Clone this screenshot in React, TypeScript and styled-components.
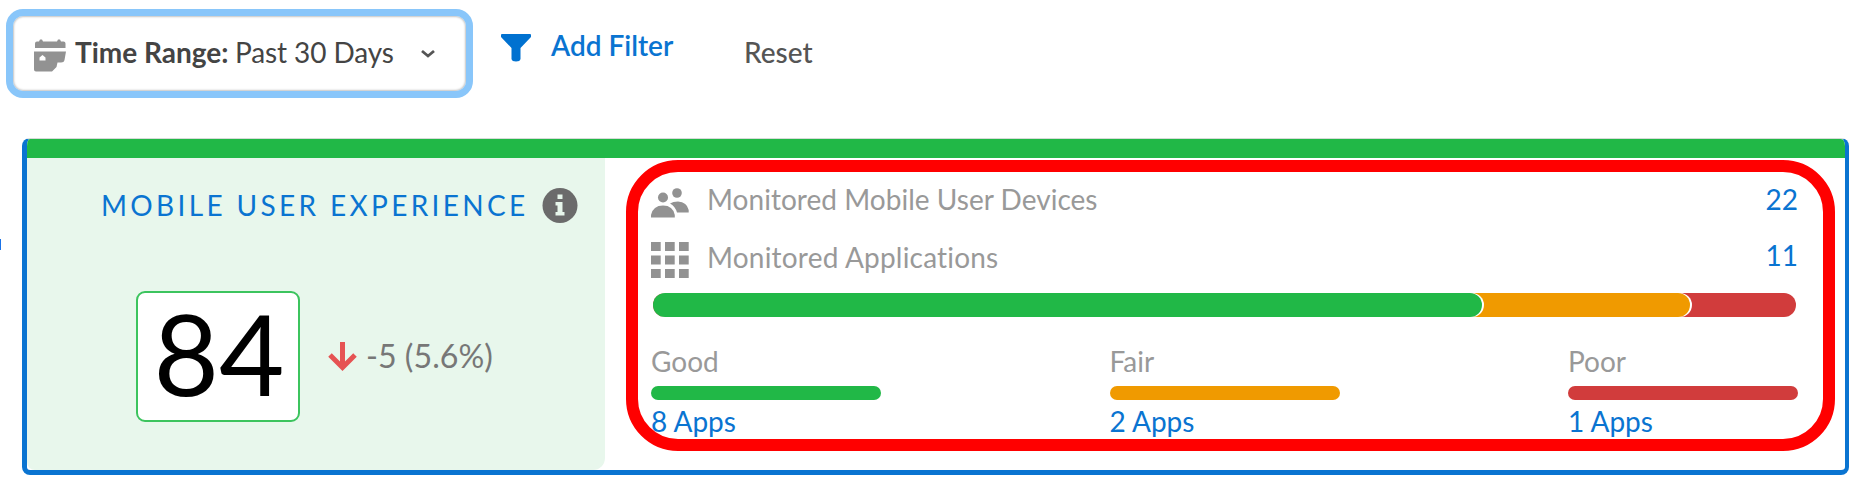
import React from "react";
import styled, { createGlobalStyle } from "styled-components";

const GlobalStyle = createGlobalStyle`
  * { box-sizing: border-box; }
  body {
    margin: 0;
    background: #fff;
    overflow: hidden;
    font-family: Lato, "Open Sans", sans-serif;
    font-size: 28px;
    line-height: 34px;
    font-variant-ligatures: none;
  }
`;

const colors = {
  good: "#21b847",
  fair: "#f09a00",
  poor: "#d13c3c",
  link: "#0a74d1",
  muted: "#999",
};

const Page = styled.main`
  position: relative;
  width: 1854px;
  height: 482px;
  background: #fff;
`;

const Toolbar = styled.header`
  display: flex;
  align-items: flex-start;
  height: 138px;
  padding: 9px 0 0 6px;
`;

const TimeButton = styled.button`
  display: flex;
  align-items: center;
  width: 467px;
  height: 89px;
  padding: 0 0 3px 21px;
  border: 7px solid #89c6fa;
  border-radius: 17px;
  background: #fff;
  box-shadow: inset 0 0 2px 1px #c4c4c4;
  font: inherit;
  color: #444;
  white-space: nowrap;
`;

const CalendarIcon = styled.svg`
  flex: none;
  margin: 6px 9px 0 0;
`;

const TimeLabel = styled.span`
  width: 160px;
  font-weight: 700;
  text-align: left;
`;

const TimeValue = styled.span`
  width: 185px;
  text-align: left;
  letter-spacing: -0.1px;
`;

const FilterButton = styled.a`
  display: flex;
  align-items: flex-start;
  margin: 19px 0 0 28px;
  width: 243px;
  color: ${colors.link};
  font-weight: 600;
  gap: 20px;
  white-space: nowrap;
`;

const FunnelIcon = styled.svg`
  flex: none;
  margin-top: 6px;
`;

const Reset = styled.a`
  margin-top: 26px;
  color: #555;
  font-weight: 500;
`;

const Card = styled.section`
  display: flex;
  flex-direction: column;
  width: 1827px;
  height: 337px;
  margin-left: 22px;
  border: 5px solid ${colors.link};
  border-top: 1px solid #d5dbd7;
  border-right-width: 4px;
  border-radius: 8px;
  overflow: hidden;
`;

const StatusStrip = styled.div`
  flex: none;
  height: 19px;
  background: ${colors.good};
`;

const CardBody = styled.div`
  display: flex;
  flex: 1;
`;

const Summary = styled.div`
  width: 578px;
  padding: 30px 0 0 75px;
  background: #e8f7ec;
  border-radius: 0 0 12px 8px;
`;

const SummaryHeader = styled.div`
  display: flex;
  align-items: flex-start;
`;

const SummaryTitle = styled.h2`
  width: 440px;
  margin: 0 0 0 -1px;
  padding-right: 0;
  flex: 0 0 441px;
  color: ${colors.link};
  font-size: 28px;
  font-weight: 400;
  letter-spacing: 3.35px;
  white-space: nowrap;
`;

const ScoreRow = styled.div`
  display: flex;
  align-items: center;
  height: 131px;
  margin: 67px 0 0 34px;
`;

const Score = styled.div`
  display: flex;
  justify-content: center;
  width: 164px;
  height: 131px;
  padding-left: 2px;
  border: 2px solid #3cc45e;
  border-radius: 9px;
  background: #fff;
  color: #000;
  font-size: 113px;
  line-height: 118px;
`;

const ArrowIcon = styled.svg`
  flex: none;
  margin-left: 28px;
`;

const Change = styled.span`
  margin: 0 0 2px 9px;
  color: #777;
  font-size: 32.2px;
  white-space: nowrap;
`;

const Details = styled.div`
  flex: 1;
  padding: 24px 47px 0 46px;
`;

const MetricRow = styled.div<{ $height: number }>`
  display: flex;
  align-items: flex-start;
  height: ${(p) => p.$height}px;
`;

const MetricIcon = styled.svg<{ $top: number }>`
  flex: none;
  margin: ${(p) => p.$top}px 18px 0 0;
`;

const MetricLabel = styled.span<{ $tracking: number }>`
  flex: 1;
  color: ${colors.muted};
  letter-spacing: ${(p) => p.$tracking}px;
`;

const MetricValue = styled.a<{ $raise?: boolean }>`
  margin-top: ${(p) => (p.$raise ? -2 : 0)}px;
  color: ${colors.link};
`;

const StackedBar = styled.div`
  display: flex;
  width: 1143px;
  height: 24px;
  margin-left: 2px;
  border-radius: 12px;
  background: ${colors.poor};
  overflow: hidden;
`;

const Segment = styled.div<{ $color: string; $width: number; $layer: number }>`
  position: relative;
  z-index: ${(p) => p.$layer};
  width: ${(p) => p.$width}px;
  height: 24px;
  margin-right: -14px;
  border-radius: 0 12px 12px 0;
  background: ${(p) => p.$color};
  box-shadow: 2px 0 0 #fff;
`;

const Legend = styled.div`
  display: flex;
  justify-content: space-between;
  margin-top: 27px;
`;

const LegendItem = styled.div`
  display: flex;
  flex-direction: column;
  width: 230px;
`;

const LegendLabel = styled.span`
  color: ${colors.muted};
`;

const LegendBar = styled.div<{ $color: string }>`
  height: 14px;
  margin: 8px 0 4px;
  border-radius: 7px;
  background: ${(p) => p.$color};
`;

const LegendLink = styled.a`
  color: ${colors.link};
`;

const Highlight = styled.div`
  position: absolute;
  z-index: 5;
  left: 626px;
  top: 160px;
  width: 1209px;
  height: 291px;
  border: 12px solid #f00;
  border-radius: 52px;
`;

const EdgeMark = styled.div`
  position: absolute;
  left: 0;
  top: 239px;
  width: 1px;
  height: 11px;
  background: #1a73e8;
`;

const ratings = [
  { name: "Good", apps: 8, color: colors.good },
  { name: "Fair", apps: 2, color: colors.fair },
  { name: "Poor", apps: 1, color: colors.poor },
];

export default function App() {
  return (
    <Page>
      <GlobalStyle />
      <Toolbar>
        <TimeButton>
          <CalendarIcon width="32" height="33" viewBox="0 0 32 33" fill="#929292">
            <path d="M1 9V4.500Q1 2.500 3 2.500H5L6 .5H8L9 2.500H23L24 .5H26L27 2.500H29.500Q31.500 2.500 31.500 4.500V9Z" />
            <path
              fillRule="evenodd"
              d="M0 12.500H32L30.500 21Q30 23.500 27 23.500H23.500L22.500 28L18 32.500H2Q0 32.500 0 30.500ZM5.500 21.500H11.500V18.500L8.500 16L5.500 18.500Z"
            />
          </CalendarIcon>
          <TimeLabel>Time Range:</TimeLabel>
          <TimeValue>Past 30 Days</TimeValue>
          <svg width="16" height="12" viewBox="0 0 16 12" fill="none" stroke="#555" strokeWidth="2.800">
            <path d="M2 5L8 10L14 5" />
          </svg>
        </TimeButton>
        <FilterButton>
          <FunnelIcon width="30" height="28" viewBox="0 0 30 28" fill="#0071d0">
            <path d="M0 1Q0 0 1 0H29Q30 0 30 1V3L19.500 14V25Q19 27.500 15 27.500T10.500 25V14L0 3Z" />
          </FunnelIcon>
          Add Filter
        </FilterButton>
        <Reset>Reset</Reset>
      </Toolbar>
      <Card>
        <StatusStrip />
        <CardBody>
          <Summary>
            <SummaryHeader>
              <SummaryTitle>MOBILE USER EXPERIENCE</SummaryTitle>
              <svg width="36" height="36" viewBox="0 0 36 36">
                <circle cx="18" cy="17.500" r="17.500" fill="#6b6b6b" />
                <path d="M15.500 6.500H20.500V11H15.500ZM13.500 14H20.500V24H22.500V27.500H13.500V24H15.500V17.500H13.500Z" fill="#e7f6eb" />
              </svg>
            </SummaryHeader>
            <ScoreRow>
              <Score>84</Score>
              <ArrowIcon width="29" height="30" viewBox="0 0 29 30" fill="none" stroke="#e65353" strokeWidth="5">
                <path d="M14.500 0V26M2 13L14.500 25.500L27 13" />
              </ArrowIcon>
              <Change>-5 (5.6%)</Change>
            </ScoreRow>
          </Summary>
          <Details>
            <MetricRow $height={58}>
              <MetricIcon $top={6} width="38" height="30" viewBox="0 0 38 30" fill="#929292">
                <circle cx="26" cy="5" r="4.800" />
                <circle cx="12" cy="9.500" r="5" />
                <path d="M0 29.500V27Q2 17.500 12 17.500T23.800 27V29.500Z" />
                <path d="M19 15.500Q22 13.500 27 13.500Q36 14 37.700 22V24.500H26Q24 18 19 15.500Z" />
              </MetricIcon>
              <MetricLabel $tracking={0.03}>Monitored Mobile User Devices</MetricLabel>
              <MetricValue>22</MetricValue>
            </MetricRow>
            <MetricRow $height={53}>
              <MetricIcon $top={2} width="38" height="37" viewBox="0 0 38 37" fill="#929292">
                {[0, 13.5, 27].map((y) =>
                  [0, 14, 28].map((x) => <rect key={`${x}-${y}`} x={x} y={y} width="9.700" height="9" />)
                )}
              </MetricIcon>
              <MetricLabel $tracking={0.2}>Monitored Applications</MetricLabel>
              <MetricValue $raise>11</MetricValue>
            </MetricRow>
            <StackedBar>
              <Segment $color={colors.good} $width={829} $layer={2} />
              <Segment $color={colors.fair} $width={222} $layer={1} />
            </StackedBar>
            <Legend>
              {ratings.map((r) => (
                <LegendItem key={r.name}>
                  <LegendLabel>{r.name}</LegendLabel>
                  <LegendBar $color={r.color} />
                  <LegendLink>{r.apps} Apps</LegendLink>
                </LegendItem>
              ))}
            </Legend>
          </Details>
        </CardBody>
      </Card>
      <Highlight />
      <EdgeMark />
    </Page>
  );
}
